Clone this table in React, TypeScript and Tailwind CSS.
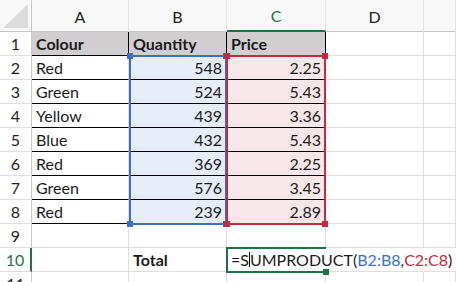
import React from "react";

const rows: (string | number)[][] = [
    ["Colour", "Quantity", "Price"],
    ["Red", 548, "2.25"],
    ["Green", 524, "5.43"],
    ["Yellow", 439, "3.36"],
    ["Blue", 432, "5.43"],
    ["Red", 369, "2.25"],
    ["Green", 576, "3.45"],
    ["Red", 239, "2.89"],
];

const GRID = "border-r border-b border-[#dedede]";

function Handle({ className }: { className: string }) {
    return <div className={`absolute w-[6px] h-[6px] ${className}`} />;
}

// coloured range outline drawn over the cells, with its four corner squares
function RangeBox({ box, color, handle }: { box: string; color: string; handle: string }) {
    return (
        <div className={`absolute border-2 pointer-events-none ${box} ${color}`}>
            <Handle className={`-left-[4px] -top-[4px] ${handle}`} />
            <Handle className={`-right-[4px] -top-[4px] ${handle}`} />
            <Handle className={`-left-[4px] -bottom-[4px] ${handle}`} />
            <Handle className={`-right-[4px] -bottom-[4px] ${handle}`} />
        </div>
    );
}

export default function App() {
    return (
        <div className="relative w-[456px] h-[282px] overflow-hidden bg-white text-[#1a1a1a] text-[16px] font-['Lato','Liberation_Sans',sans-serif]">
            <div className="grid grid-cols-[32px_97px_98px_99px_98px_1fr] grid-rows-[32px_repeat(11,24px)]">
                {/* corner */}
                <div className="bg-[#f8f8f8] border-r border-b border-r-[#c8c8c8] border-b-[#c4c4c4] flex items-end justify-end pr-[3px] pb-[3px]">
                    <svg width="25" height="24" viewBox="0 0 25 24">
                        <polygon points="25,0 25,24 0,24" fill="#dcdcdc" />
                    </svg>
                </div>
                {["A", "B", "C", "D", ""].map((c) => (
                    <div
                        key={c || "E"}
                        className={`bg-[#f8f8f8] border-r border-r-[#e4e4e4] flex items-center justify-center pt-[2px] ${
                            c === "C" ? "border-b-2 border-b-[#1f7244] text-[#1f7244]" : "border-b border-b-[#c4c4c4] text-[#222]"
                        }`}
                    >
                        {c}
                    </div>
                ))}

                {Array.from({ length: 11 }, (_, r) => {
                    const rowNo = r + 1;
                    const values = rows[r];
                    return (
                        <React.Fragment key={rowNo}>
                            <div
                                className={`flex items-center justify-center border-b border-b-[#dedede] ${
                                    rowNo === 10
                                        ? "border-r-2 border-r-[#1f7244] text-[#1f7244]"
                                        : "border-r border-r-[#c8c8c8] text-[#222]"
                                }`}
                            >
                                {rowNo}
                            </div>
                            {rowNo === 10 ? (
                                <>
                                    <div className={GRID} />
                                    <div className={`${GRID} flex items-center px-[4px] font-bold`}>Total</div>
                                    <div className="col-span-3 border-b border-[#dedede] flex items-center pl-[4px] whitespace-nowrap">
                                        <span>=S</span>
                                        <span className="inline-block w-px h-[15px] bg-black" />
                                        <span>UMPRODUCT(</span>
                                        <span className="text-[#3a72c8]">B2:B8</span>
                                        <span>,</span>
                                        <span className="text-[#c8283c]">C2:C8</span>
                                        <span>)</span>
                                    </div>
                                </>
                            ) : values ? (
                                <>
                                    <div
                                        className={`border-b border-b-black border-r flex items-center px-[4px] ${
                                            rowNo === 1 ? "bg-[#d0cece] border-r-black font-bold" : "border-r-[#dedede]"
                                        }`}
                                    >
                                        {values[0]}
                                    </div>
                                    <div
                                        className={`border-b border-b-black border-r flex items-center px-[4px] ${
                                            rowNo === 1
                                                ? "bg-[#d0cece] border-r-black font-bold"
                                                : "bg-[#e6edf8] border-r-[#dedede] justify-end"
                                        }`}
                                    >
                                        {values[1]}
                                    </div>
                                    <div
                                        className={`border-b border-b-black border-r flex items-center px-[4px] ${
                                            rowNo === 1
                                                ? "bg-[#d0cece] border-r-black font-bold"
                                                : "bg-[#f8e7e8] border-r-[#dedede] justify-end"
                                        }`}
                                    >
                                        {values[2]}
                                    </div>
                                    <div className={GRID} />
                                    <div className={GRID} />
                                </>
                            ) : (
                                <>
                                    <div className={GRID} />
                                    <div className={GRID} />
                                    <div className={GRID} />
                                    <div className={GRID} />
                                    <div className={GRID} />
                                </>
                            )}
                        </React.Fragment>
                    );
                })}
            </div>

            <RangeBox box="left-[129px] top-[55px] w-[98px] h-[170px]" color="border-[#3a6fc6]" handle="bg-[#3a6fc6]" />
            <RangeBox box="left-[226px] top-[55px] w-[100px] h-[170px]" color="border-[#c8283c]" handle="bg-[#c8283c]" />

            {/* active cell C10, open for editing so its right edge is not drawn */}
            <div className="absolute left-[226px] top-[247px] w-[100px] h-[26px] border-2 border-r-0 border-[#1f7244] pointer-events-none">
                <div className="absolute -right-[3px] -bottom-[4px] w-[6px] h-[6px] bg-[#1f7244]" />
            </div>
        </div>
    );
}
